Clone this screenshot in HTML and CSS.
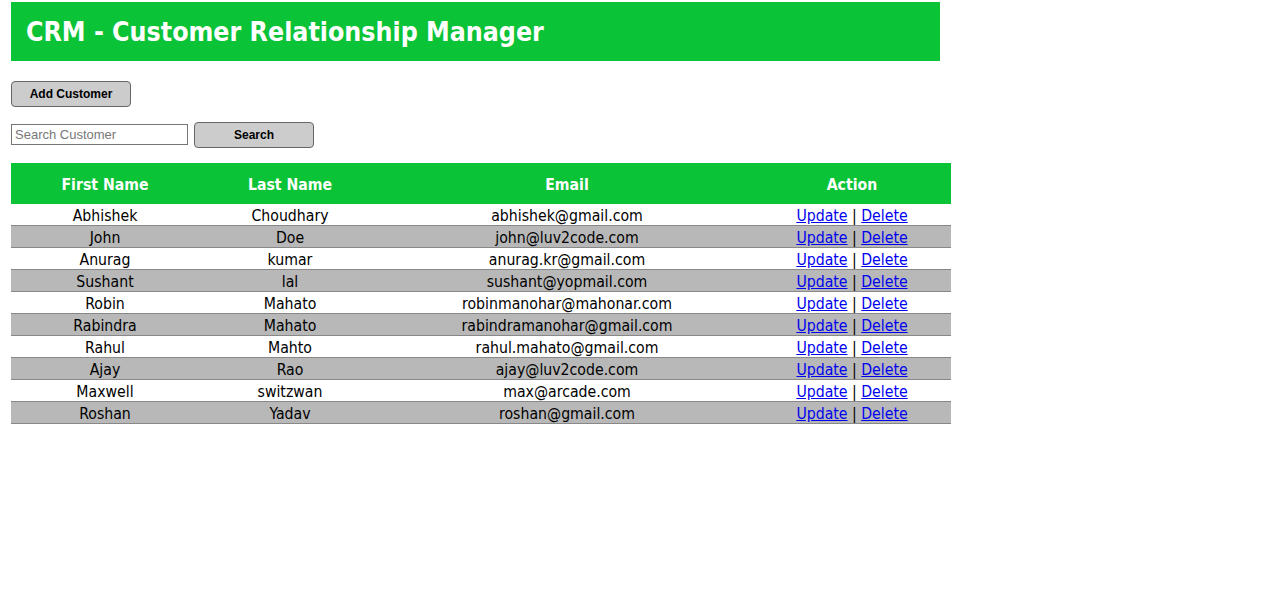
FILE: index.html
```html
<!DOCTYPE html>
<html>
<head>
<meta charset="utf-8">
<title>CRM</title>
<link rel="stylesheet" href="styles.css">
</head>
<body>
<div class="page">
  <div class="header"><h1>CRM - Customer Relationship Manager</h1></div>
  <div class="actions">
    <button class="btn">Add Customer</button>
  </div>
  <form class="search">
    <input type="text" placeholder="Search Customer">
    <button type="button" class="btn">Search</button>
  </form>
  <table class="list">
    <thead>
      <tr><th class="c1">First Name</th><th class="c2">Last Name</th><th class="c3">Email</th><th class="c4">Action</th></tr>
    </thead>
    <tbody>
      <tr><td>Abhishek</td><td>Choudhary</td><td>abhishek@gmail.com</td><td><a href="#">Update</a> | <a href="#">Delete</a></td></tr>
      <tr><td>John</td><td>Doe</td><td>john@luv2code.com</td><td><a href="#">Update</a> | <a href="#">Delete</a></td></tr>
      <tr><td>Anurag</td><td>kumar</td><td>anurag.kr@gmail.com</td><td><a href="#">Update</a> | <a href="#">Delete</a></td></tr>
      <tr><td>Sushant</td><td>lal</td><td>sushant@yopmail.com</td><td><a href="#">Update</a> | <a href="#">Delete</a></td></tr>
      <tr><td>Robin</td><td>Mahato</td><td>robinmanohar@mahonar.com</td><td><a href="#">Update</a> | <a href="#">Delete</a></td></tr>
      <tr><td>Rabindra</td><td>Mahato</td><td>rabindramanohar@gmail.com</td><td><a href="#">Update</a> | <a href="#">Delete</a></td></tr>
      <tr><td>Rahul</td><td>Mahto</td><td>rahul.mahato@gmail.com</td><td><a href="#">Update</a> | <a href="#">Delete</a></td></tr>
      <tr><td>Ajay</td><td>Rao</td><td>ajay@luv2code.com</td><td><a href="#">Update</a> | <a href="#">Delete</a></td></tr>
      <tr><td>Maxwell</td><td>switzwan</td><td>max@arcade.com</td><td><a href="#">Update</a> | <a href="#">Delete</a></td></tr>
      <tr><td>Roshan</td><td>Yadav</td><td>roshan@gmail.com</td><td><a href="#">Update</a> | <a href="#">Delete</a></td></tr>
    </tbody>
  </table>
</div>
</body>
</html>
```
FILE: styles.css
```css
html, body {
  margin: 0;
  padding: 0;
  background: #fff;
}
.page {
  padding: 2px 0 0 11px;
  font-family: "DejaVu Sans Condensed", "DejaVu Sans", Verdana, sans-serif;
  color: #000;
}
.header {
  width: 929px;
  height: 59px;
  background: #0bc336;
  display: flex;
  align-items: center;
  padding-left: 15px;
  box-sizing: border-box;
}
.header h1 {
  margin: 0;
  color: #fff;
  font-size: 26.5px;
  font-weight: bold;
}
.actions {
  margin-top: 20px;
}
.btn {
  width: 120px;
  height: 26px;
  background: #cccccc;
  border: 1px solid #666;
  border-radius: 4px;
  font-family: "Liberation Sans", Arial, sans-serif;
  font-weight: bold;
  font-size: 12px;
  color: #000;
  padding: 0;
}
.search {
  margin: 15px 0 0 0;
  display: flex;
  align-items: center;
  gap: 6px;
}
.search input {
  width: 177px;
  height: 21px;
  box-sizing: border-box;
  border: 1px solid #767676;
  font-family: "Liberation Sans", Arial, sans-serif;
  font-size: 13px;
  padding: 0 3px;
  margin-top: -1px;
}
.search input::placeholder {
  color: #777;
}
.list {
  margin-top: 15px;
  border-collapse: collapse;
  width: 940px;
  font-size: 15.7px;
}
.list th {
  background: #0bc336;
  color: #fff;
  font-weight: bold;
  height: 41px;
  padding: 1px 0 0 0;
  box-sizing: border-box;
}
.c1 { width: 188px; }
.c2 { width: 182px; }
.c3 { width: 372px; }
.c4 { width: 198px; }
.list td {
  text-align: center;
  height: 21px;
  padding: 2px 0 0 0;
  box-sizing: border-box;
  border-bottom: 1px solid #888;
  line-height: 19px;
}
.list tbody tr:nth-child(even) td {
  background: #b8b8b8;
}
.list a {
  color: #0000ee;
}
```
